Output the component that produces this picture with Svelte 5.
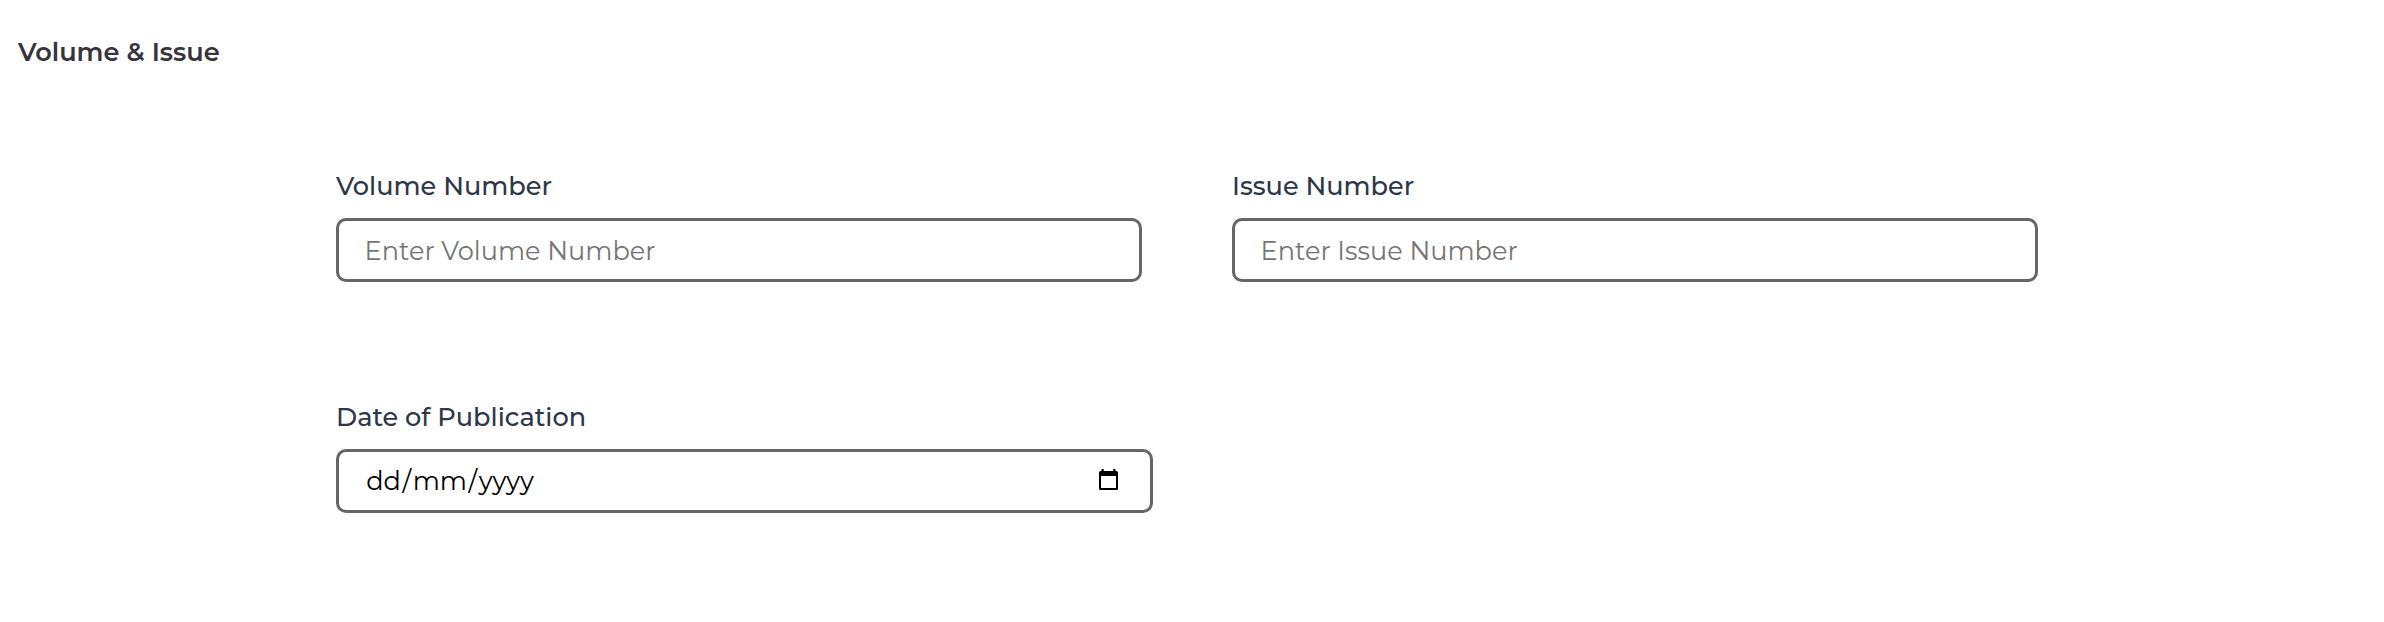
<script>
  const fields = [
    { id: 'volume', label: 'Volume Number', placeholder: 'Enter Volume Number' },
    { id: 'issue', label: 'Issue Number', placeholder: 'Enter Issue Number' }
  ];
</script>

<section class="page">
  <h2>Volume &amp; Issue</h2>
  <form class="grid">
    {#each fields as field}
      <div class="field">
        <label for={field.id}>{field.label}</label>
        <input class="control" id={field.id} type="text" placeholder={field.placeholder} />
      </div>
    {/each}
    <div class="field date">
      <label for="published">Date of Publication</label>
      <button class="control" id="published" type="button">
        <span class="value"><span class="part">dd</span><span>/</span><span class="part">mm</span><span>/</span><span class="part">yyyy</span></span>
        <svg width="19" height="21" viewBox="0 0 19 21" aria-hidden="true">
          <path fill-rule="evenodd" d="M2.5 0h2.2v2h9.6V0h2.2v2H17.5Q19 2 19 3.6V19.5Q19 21 17.5 21H1.5Q0 21 0 19.5V3.6Q0 2 1.5 2h1ZM2 7v12h15V7Z" />
        </svg>
      </button>
    </div>
  </form>
</section>

<style>
  :global(body) {
    background: #fff;
  }
  .page {
    box-sizing: border-box;
    height: 622px;
    padding: 36px 18px 0;
    overflow: hidden;
    font-family: Montserrat, Inter, sans-serif;
    font-size: 25.6px;
    line-height: 32px;
  }
  h2 {
    margin: 0;
    font-size: 25.6px;
    font-weight: 600;
    color: #37343d;
  }
  .grid {
    display: grid;
    grid-template-columns: 806px 806px;
    column-gap: 90px;
    row-gap: 119px;
    padding: 102px 0 0 318px;
  }
  .field {
    display: flex;
    flex-direction: column;
    gap: 16px;
  }
  label {
    height: 32px;
    font-weight: 500;
    color: #2d3748;
  }
  .control {
    box-sizing: border-box;
    width: 100%;
    height: 64px;
    margin: 0;
    padding: 1px 25.6px 0;
    border: 3px solid #666;
    border-radius: 10px;
    background: #fff;
    font: inherit;
    color: #000;
  }
  .control::placeholder {
    color: #757575;
    opacity: 1;
  }
  .date .control {
    display: flex;
    align-items: center;
    justify-content: space-between;
    width: 817px;
    padding-top: 0;
    padding-right: 32px;
    text-align: left;
  }
  .value {
    display: flex;
  }
  .part {
    padding: 0 1.6px;
  }
  svg {
    flex: none;
    margin-bottom: 3px;
  }
</style>
